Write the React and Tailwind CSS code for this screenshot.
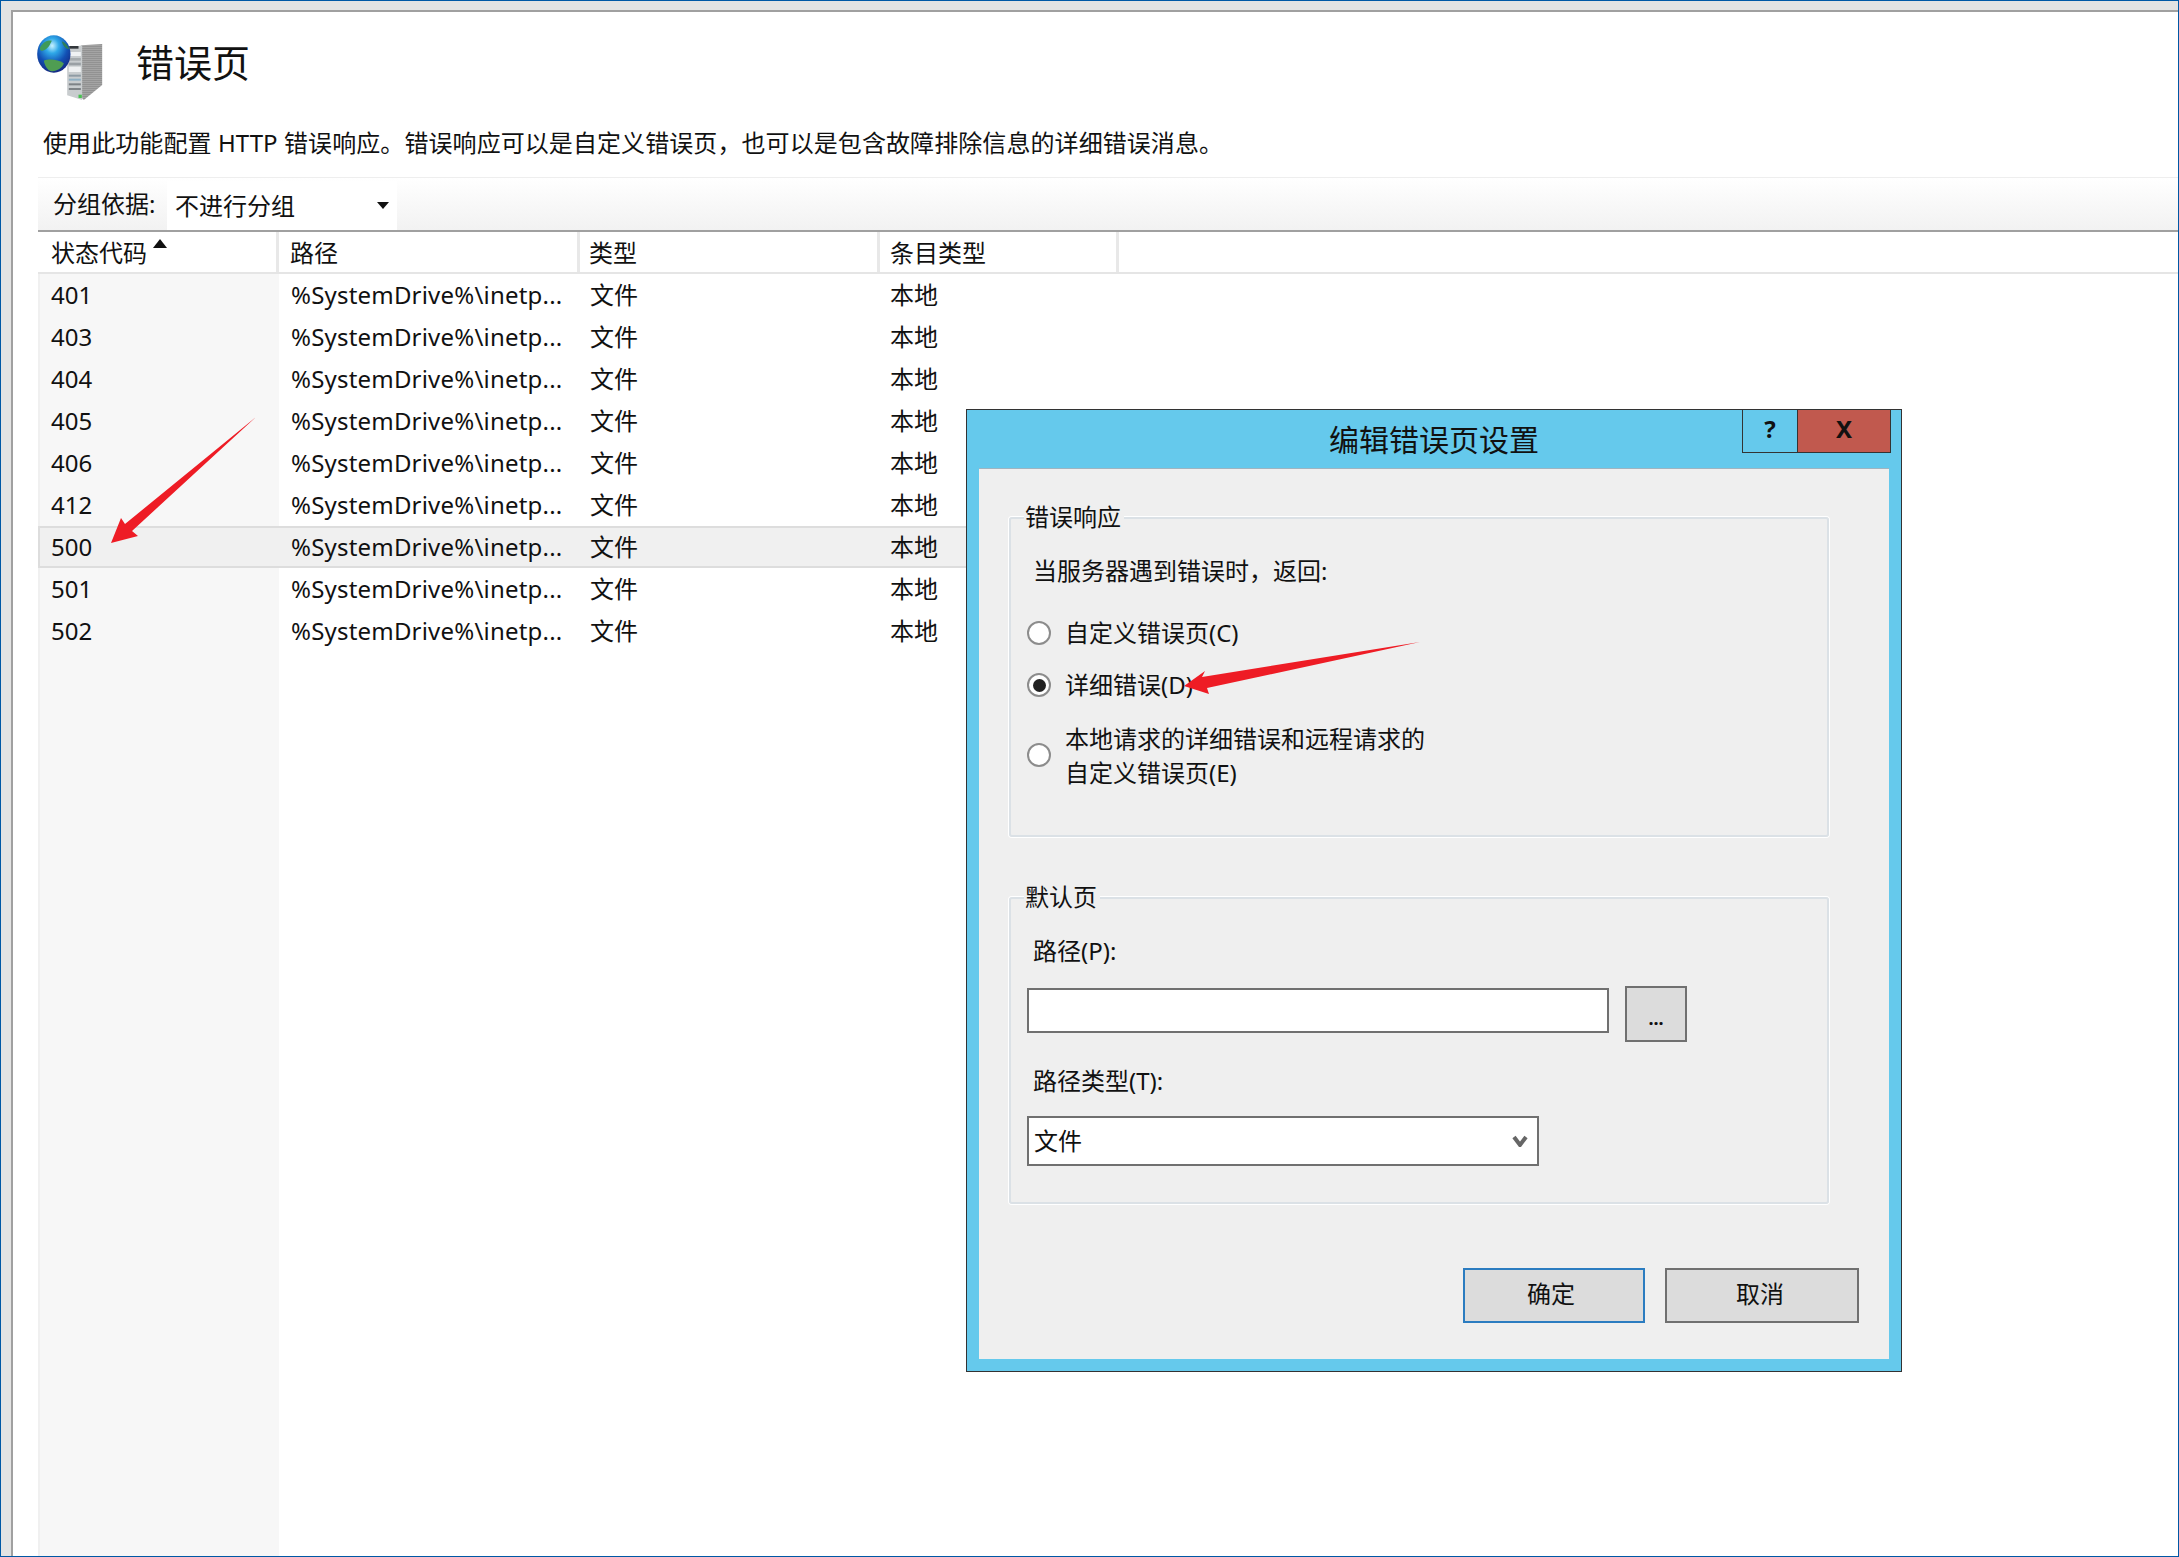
import React from 'react';

const rows = ['401', '403', '404', '405', '406', '412', '500', '501', '502'];

function ServerIcon() {
  return (
    <svg viewBox="50 45 200 195" className="w-[67px] h-[65px] shrink-0">
      <defs>
        <radialGradient id="globe" cx="45%" cy="28%" r="72%">
          <stop offset="0%" stopColor="#c8f2ff" />
          <stop offset="28%" stopColor="#2fa8e8" />
          <stop offset="65%" stopColor="#1250b4" />
          <stop offset="100%" stopColor="#142a84" />
        </radialGradient>
        <pattern id="dots" width="6" height="6" patternUnits="userSpaceOnUse">
          <rect width="6" height="6" fill="#a4a4a4" />
          <rect width="3" height="3" fill="#808080" />
        </pattern>
      </defs>
      <polygon points="182,76 245,72 245,195 190,240 182,232" fill="url(#dots)" />
      <polygon points="140,85 185,76 185,240 140,226" fill="#c8ccce" />
      <rect x="146" y="78" width="28" height="8" fill="#33383c" />
      <rect x="145" y="96" width="36" height="12" fill="#f0f2f3" />
      <rect x="145" y="114" width="36" height="8" fill="#a5aaad" />
      <rect x="145" y="128" width="36" height="8" fill="#9aa0a4" />
      <rect x="145" y="140" width="36" height="16" fill="#eef0f1" />
      <rect x="145" y="164" width="36" height="6" fill="#8f9ca4" />
      <rect x="145" y="176" width="36" height="6" fill="#8fb0c4" />
      <rect x="145" y="190" width="36" height="6" fill="#7d8286" />
      <rect x="145" y="204" width="36" height="6" fill="#7d8286" />
      <rect x="174" y="224" width="10" height="10" fill="#48c050" />
      <ellipse cx="100" cy="102" rx="50" ry="56" fill="url(#globe)" />
      <path d="M58 84 C68 64 84 60 94 62 C88 74 84 84 72 90 C66 94 58 94 58 84Z" fill="#3f9a58" />
      <path d="M70 122 C86 116 112 118 130 130 C124 148 98 160 84 150 C76 142 72 132 70 122Z" fill="#4f9d52" />
      <path d="M124 64 C134 68 142 76 146 88 C136 88 126 76 124 64Z" fill="#2f7f5a" />
    </svg>
  );
}

function Radio({ checked, className }) {
  return (
    <span className={`flex items-center justify-center w-6 h-6 shrink-0 rounded-full border-2 border-[#8c8c8c] bg-white ${className || ''}`}>
      {checked && <span className="w-[13px] h-[13px] rounded-full bg-[#222]" />}
    </span>
  );
}

function Group({ title, className, children }) {
  return (
    <div className={`relative w-[820px] rounded-[3px] border-2 border-[#dbe1e6] shadow-[0_0_0_1px_#ffffff] ${className}`}>
      <span className="absolute left-[13px] -top-[18px] bg-[#efefef] pl-px pr-[3px] leading-[32px]">{title}</span>
      {children}
    </div>
  );
}

function Dialog() {
  return (
    <div className="absolute left-[965px] top-[408px] w-[936px] h-[963px] flex flex-col border border-[#333] bg-[#65c9ec] px-3 pb-3">
      <div className="grid grid-cols-[1fr_auto_1fr] h-[59px] shrink-0">
        <span />
        <span className="text-[30px] leading-[60px] text-[#111]">编辑错误页设置</span>
        <div className="flex justify-end -mr-[2px]">
          <div className="flex h-[43px] border border-t-0 border-[#333] text-[24px] font-bold leading-[38px]">
            <span className="w-[55px] border-r border-[#333] text-center">?</span>
            <span className="w-[92px] bg-[#c1594e] text-center">X</span>
          </div>
        </div>
      </div>
      <div className="flex-1 flex flex-col bg-[#efefef] px-[30px] pt-12 shadow-[0_-1px_0_#9fb4c0] text-[24px] text-[#111]">
        <Group title="错误响应" className="h-[320px] pl-[22px] pt-[35px]">
          <div className="leading-[34px]">当服务器遇到错误时，返回:</div>
          <div className="flex items-center gap-[14px] -ml-[6px] mt-7 leading-[34px]">
            <Radio />
            <span>自定义错误页(C)</span>
          </div>
          <div className="flex items-center gap-[14px] -ml-[6px] mt-[18px] leading-[34px]">
            <Radio checked />
            <span>详细错误(D)</span>
          </div>
          <div className="flex items-center gap-[14px] -ml-[6px] mt-5 leading-[34px]">
            <Radio className="mb-[2px]" />
            <span>本地请求的详细错误和远程请求的<br />自定义错误页(E)</span>
          </div>
        </Group>
        <Group title="默认页" className="h-[307px] mt-[60px] pl-4 pt-[35px]">
          <div className="pl-[6px] leading-[34px]">路径(P):</div>
          <div className="flex items-start mt-[18px]">
            <div className="w-[582px] h-[45px] mt-[2px] border-2 border-[#707070] bg-white" />
            <button className="w-[62px] h-14 ml-4 pt-2 border-2 border-[#707070] bg-[#dcdcdc] text-[18px] font-bold leading-none">...</button>
          </div>
          <div className="pl-[6px] mt-[22px] leading-[34px]">路径类型(T):</div>
          <div className="flex items-center justify-between w-[512px] h-[50px] mt-[18px] pl-[5px] pr-[9px] pb-px border-2 border-[#707070] bg-white">
            <span>文件</span>
            <svg width="16" height="12" viewBox="0 0 16 12"><polyline points="2,2 8,10 14,2" fill="none" stroke="#666" strokeWidth="4" /></svg>
          </div>
        </Group>
        <div className="flex justify-end gap-5 mt-16">
          <button className="w-[182px] h-[55px] pr-[6px] pb-[3px] border-2 border-[#2b7cc0] bg-[#dcdcdc]">确定</button>
          <button className="w-[194px] h-[55px] pr-1 pb-[3px] border-2 border-[#707070] bg-[#dcdcdc]">取消</button>
        </div>
      </div>
    </div>
  );
}

function App() {
  return (
    <div className="relative w-[2179px] h-[1557px] overflow-hidden flex flex-col border border-[#0058a5] bg-[#e3e3e3] pl-[10px] pt-[9px] font-['Noto_Sans','Noto_Sans_CJK_SC',sans-serif] text-[24px] text-[#111]">
      <div className="flex-1 flex flex-col min-h-0 border-l-2 border-t-2 border-[#a0a0a0] bg-white">
        <div className="flex items-start pl-6 pt-[23px] h-[108px] shrink-0">
          <ServerIcon />
          <h1 className="ml-8 text-[38px] font-normal leading-[54px]">错误页</h1>
        </div>
        <p className="pl-[30px] h-[57px] shrink-0 leading-[46px] tracking-[0.08px]">使用此功能配置 HTTP 错误响应。错误响应可以是自定义错误页，也可以是包含故障排除信息的详细错误消息。</p>

        <div className="flex-1 flex flex-col min-h-0 ml-[25px]">
          <div className="flex h-[55px] shrink-0 pt-[3px] border-t border-[#eee] border-b-2 border-b-[#a0a0a0] bg-gradient-to-b from-white to-[#f2f2f2]">
            <span className="w-[129px] pl-[15px] leading-[46px]">分组依据:</span>
            <div className="relative w-[230px] bg-white pl-2 leading-[50px]">
              不进行分组
              <svg className="absolute right-[8px] top-[21px]" width="12" height="8" viewBox="0 0 12 8"><polygon points="0,0 12,0 6,7" fill="#111" /></svg>
            </div>
          </div>

          <div className="flex h-[42px] shrink-0 border-b-2 border-[#e5e5e5] leading-[42px]">
            <div className="relative w-[241px] pl-[13px] border-r-[3px] border-[#e8e8e8]">
              状态代码
              <svg className="absolute left-[115px] top-[7px]" width="14" height="9" viewBox="0 0 14 9"><polygon points="7,0 14,9 0,9" fill="#111" /></svg>
            </div>
            <div className="w-[301px] pl-[11px] border-r-[3px] border-[#e8e8e8]">路径</div>
            <div className="w-[300px] pl-[9px] border-r-[3px] border-[#e8e8e8]">类型</div>
            <div className="w-[239px] pl-[10px] border-r-[3px] border-[#e8e8e8]">条目类型</div>
          </div>

          <div className="flex-1 bg-[linear-gradient(to_right,#f0f0f0_2px,#f7f7f7_2px,#f7f7f7_241px,#fff_241px)]">
            {rows.map((code) => (
              <div
                key={code}
                className={`grid grid-cols-[241px_301px_300px_1fr] w-[1300px] h-[42px] leading-[42px] ${code === '500' ? 'bg-[#f0f0f0] shadow-[inset_2px_2px_0_#dddddd,inset_0_-2px_0_#dddddd]' : ''}`}
              >
                <span className="pl-[13px]">{code}</span>
                <span className="pl-[12px] tracking-[0.2px]">%SystemDrive%\inetp...</span>
                <span className="pl-[10px]">文件</span>
                <span className="pl-[10px]">本地</span>
              </div>
            ))}
          </div>
        </div>
      </div>

      <Dialog />

      <svg className="absolute left-0 top-0 w-[2179px] h-[1557px] pointer-events-none" viewBox="0 0 2179 1557">
        <polygon points="255,416 131,530 137,535 110,542 120,517 124,523" fill="#ee1c25" />
        <polygon points="1419,641 1201,676 1204,670 1183,685 1208,693 1206,687" fill="#ee1c25" />
      </svg>
    </div>
  );
}

export default App;
